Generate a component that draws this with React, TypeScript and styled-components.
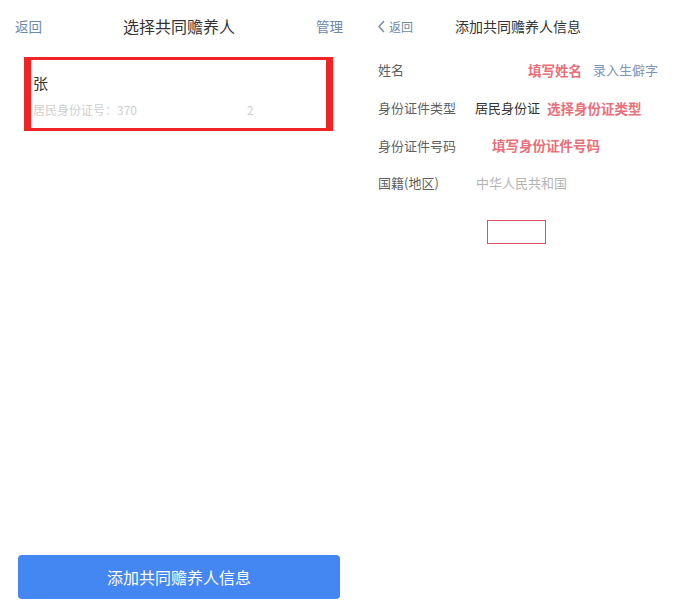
import React from 'react';
import styled, { createGlobalStyle } from 'styled-components';

const GlobalStyle = createGlobalStyle`
    html, body {
        margin: 0;
        padding: 0;
        background: #ffffff;
    }
    body {
        font-family: "Noto Sans CJK SC", "Noto Sans", "Liberation Sans", sans-serif;
    }
`;

const Page = styled.div`
    display: grid;
    grid-template-columns: 358px 1fr;
    width: 697px;
    height: 609px;
    overflow: hidden;
    background: #fff;
`;

const LeftPanel = styled.div`
    display: flex;
    flex-direction: column;
    height: 609px;
`;

const TopBar = styled.div`
    display: flex;
    align-items: center;
    justify-content: space-between;
    height: 52px;
    padding: 0 15px;
`;

const LinkText = styled.span<{ $size?: number }>`
    font-size: ${(p) => p.$size || 13.5}px;
    color: #6d88a7;
    display: flex;
    align-items: center;
`;

const Title = styled.span<{ $size?: number }>`
    font-size: ${(p) => p.$size || 16}px;
    color: #333;
`;

const Card = styled.div`
    margin: 5px 0 0 24px;
    width: 291px;
    height: 68px;
    border-style: solid;
    border-color: #f02424;
    border-width: 3px 7px;
    padding: 0 2px;
    display: flex;
    flex-direction: column;
    justify-content: center;
    gap: 9px;
`;

const Name = styled.div`
    font-size: 15px;
    color: #333;
    line-height: 20px;
    margin-top: 3px;
`;

const IdLine = styled.div`
    font-size: 12px;
    color: #cfcfcf;
    line-height: 16px;
    display: flex;
    gap: 110px;
`;

const Spacer = styled.div`
    flex: 1;
`;

const AddButton = styled.button`
    margin: 0 0 10px 18px;
    width: 322px;
    height: 44px;
    border: none;
    border-radius: 4px;
    background: #4486f2;
    color: #fff;
    font-family: inherit;
    font-size: 16px;
`;

const RightPanel = styled.div`
    display: flex;
    flex-direction: column;
    padding-left: 19px;
`;

const RightBar = styled.div`
    display: flex;
    align-items: center;
    height: 52px;
    gap: 42px;
`;

const Form = styled.div`
    display: flex;
    flex-direction: column;
    margin-top: -1px;
    padding-left: 1px;
`;

const Row = styled.div`
    display: flex;
    align-items: center;
    height: 37.7px;
`;

const Label = styled.span`
    width: 97px;
    font-size: 13px;
    color: #5f5f5f;
    flex-shrink: 0;
`;

const Value = styled.span<{ $tone: 'dark' | 'muted' | 'hint' | 'link'; $indent?: number }>`
    margin-left: ${(p) => p.$indent || 0}px;
    font-size: ${(p) => (p.$tone === 'hint' ? 13.5 : 13)}px;
    font-weight: ${(p) => (p.$tone === 'hint' ? 700 : 400)};
    color: ${(p) =>
        p.$tone === 'hint'
            ? '#e8707a'
            : p.$tone === 'link'
            ? '#7b96b5'
            : p.$tone === 'muted'
            ? '#b4b4b4'
            : '#333'};
    white-space: nowrap;
`;

const MarkBox = styled.div`
    margin: 18px 0 0 110px;
    width: 57px;
    height: 22px;
    border: 1.5px solid #d45462;
`;

const App = () => {
    return (
        <>
            <GlobalStyle />
            <Page>
                <LeftPanel>
                    <TopBar>
                        <LinkText>返回</LinkText>
                        <Title>选择共同赡养人</Title>
                        <LinkText>管理</LinkText>
                    </TopBar>
                    <Card>
                        <Name>张</Name>
                        <IdLine>
                            <span>居民身份证号：370</span>
                            <span>2</span>
                        </IdLine>
                    </Card>
                    <Spacer />
                    <AddButton>添加共同赡养人信息</AddButton>
                </LeftPanel>
                <RightPanel>
                    <RightBar>
                        <LinkText $size={12}>
                            <svg width="9" height="13" viewBox="0 0 9 13" style={{ marginRight: 3 }}>
                                <path d="M7 1 L2 6.5 L7 12" fill="none" stroke="#6d88a7" strokeWidth="1.3" />
                            </svg>
                            返回
                        </LinkText>
                        <Title $size={14}>添加共同赡养人信息</Title>
                    </RightBar>
                    <Form>
                        <Row>
                            <Label>姓名</Label>
                            <Value $tone="hint" $indent={53}>填写姓名</Value>
                            <Value $tone="link" $indent={11}>录入生僻字</Value>
                        </Row>
                        <Row>
                            <Label>身份证件类型</Label>
                            <Value $tone="dark">居民身份证</Value>
                            <Value $tone="hint" $indent={7}>选择身份证类型</Value>
                        </Row>
                        <Row>
                            <Label>身份证件号码</Label>
                            <Value $tone="hint" $indent={17}>填写身份证件号码</Value>
                        </Row>
                        <Row>
                            <Label>国籍(地区)</Label>
                            <Value $tone="muted" $indent={1}>中华人民共和国</Value>
                        </Row>
                    </Form>
                    <MarkBox />
                </RightPanel>
            </Page>
        </>
    );
};

export default App;
